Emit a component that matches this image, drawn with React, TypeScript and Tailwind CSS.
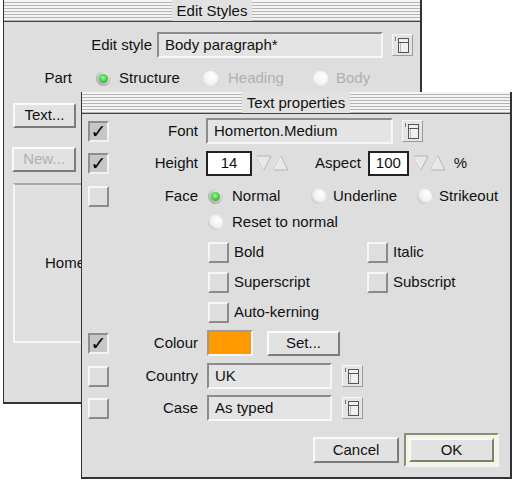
import React from "react";

type Kids = { children?: React.ReactNode };

function TitleBar({ title }: { title: string }) {
  return (
    <div className="h-[22px] flex justify-center bg-[repeating-linear-gradient(to_bottom,#f4f4f4_0px,#f4f4f4_2px,#b4b4b4_2px,#b4b4b4_3px)] border-b border-[#444]">
      <span className="bg-[#e2e2e2] px-[5px] leading-[21px] text-[15px]">{title}</span>
    </div>
  );
}

function MenuIcon() {
  return (
    <div className="w-[21px] h-[22px] shrink-0 bg-[#e4e4e4] border border-t-[#f8f8f8] border-l-[#f8f8f8] border-b-[#9a9a9a] border-r-[#9a9a9a]">
      <svg width="19" height="20" viewBox="0 0 19 20">
        <line x1="2.5" y1="2" x2="2.5" y2="6" stroke="#777" />
        <rect x="5.5" y="3.5" width="10" height="14" fill="#f0f0f0" stroke="#555" />
        <line x1="5.5" y1="7.5" x2="15.5" y2="7.5" stroke="#555" />
        <line x1="7.5" y1="8" x2="7.5" y2="17" stroke="#bbb" />
      </svg>
    </div>
  );
}

function Arrows() {
  return (
    <svg width="33" height="18" viewBox="0 0 33 18" className="shrink-0">
      <polygon points="1,2 15,2 8,16" fill="#e8e8e8" stroke="#b4b4b4" />
      <line x1="1.5" y1="2.5" x2="8" y2="15" stroke="#fafafa" />
      <polygon points="18,16 32,16 25,2" fill="#e8e8e8" stroke="#b4b4b4" />
      <line x1="25" y1="3" x2="18.5" y2="15.5" stroke="#fafafa" />
    </svg>
  );
}

function Radio({ on, off }: { on?: boolean; off?: boolean }) {
  if (off)
    return <span className="block w-[15px] h-[15px] rounded-full shrink-0 bg-[radial-gradient(circle_at_60%_35%,#ffffff_0,#f4f4f4_55%,#d6d6d6_100%)]" />;
  if (on)
    return (
      <span className="w-[15px] h-[15px] rounded-full shrink-0 flex items-center justify-center bg-[radial-gradient(circle_at_65%_30%,#f2f2f2_0,#c4c4c4_55%,#8c8c8c_100%)]">
        <span className="block w-[9px] h-[9px] rounded-full bg-[radial-gradient(circle_at_45%_40%,#a8f5a0_0,#3ccc3c_55%,#1f9a1f_100%)]" />
      </span>
    );
  return <span className="block w-[15px] h-[15px] rounded-full shrink-0 bg-[radial-gradient(circle_at_65%_35%,#ffffff_0,#f0f0f0_50%,#a0a0a0_100%)]" />;
}

function Check({ on }: { on?: boolean }) {
  if (on)
    return (
      <span className="w-[21px] h-[21px] shrink-0 flex items-center justify-center bg-[#c6c6c6] border-2 border-t-[#8e8e8e] border-l-[#8e8e8e] border-b-[#f2f2f2] border-r-[#f2f2f2] font-['DejaVu_Sans',sans-serif] text-[19px] leading-none text-black">
        ✓
      </span>
    );
  return <span className="block w-[21px] h-[21px] shrink-0 bg-[#dedede] border-2 border-t-[#f6f6f6] border-l-[#f6f6f6] border-b-[#8a8a8a] border-r-[#8a8a8a]" />;
}

function Field({ w, children }: { w: string } & Kids) {
  return (
    <div className={`${w} h-[26px] shrink-0 flex items-center px-[6px] bg-[#e4e4e4] border-2 border-t-[#8c8c8c] border-l-[#8c8c8c] border-b-[#f6f6f6] border-r-[#f6f6f6]`}>
      {children}
    </div>
  );
}

function Writable({ w, children }: { w: string } & Kids) {
  return (
    <div className={`${w} h-[25px] shrink-0 flex items-center justify-center bg-white border-2 border-[#222]`}>
      {children}
    </div>
  );
}

function Button({ w, h, dim, children }: { w: string; h: string; dim?: boolean } & Kids) {
  return (
    <div className={`${w} ${h} shrink-0 flex items-center justify-center bg-[#e2e2e2] border-2 border-t-[#fafafa] border-l-[#fafafa] border-b-[#7c7c7c] border-r-[#7c7c7c] ${dim ? "text-[#b0b0b0]" : ""}`}>
      {children}
    </div>
  );
}

function Row({ mt, tick, label, children }: { mt: string; tick?: "on" | "off"; label?: string } & Kids) {
  return (
    <div className={`${mt} h-[26px] flex items-center`}>
      <div className="w-[21px] ml-[6px] shrink-0">{tick && <Check on={tick === "on"} />}</div>
      <div className="w-[89px] text-right shrink-0">{label}</div>
      <div className="ml-[8px] flex items-center">{children}</div>
    </div>
  );
}

export default function App() {
  return (
    <div className="relative w-[514px] h-[481px] bg-white overflow-hidden font-['Liberation_Sans',Arial,sans-serif] text-[15px] text-[#111]">
      {/* Edit Styles window */}
      <div className="absolute left-[3px] top-0 w-[419px] h-[404px] bg-[#dedede] border-l border-r-2 border-b-2 border-[#333]">
        <TitleBar title="Edit Styles" />
        <div className="pt-[11px] h-[24px] flex items-center box-content">
          <div className="w-[148px] text-right">Edit style</div>
          <div className="ml-[5px]">
            <Field w="w-[226px]">Body paragraph*</Field>
          </div>
          <div className="ml-[9px]">
            <MenuIcon />
          </div>
        </div>
        <div className="mt-[9px] h-[24px] flex items-center">
          <div className="w-[68px] text-right">Part</div>
          <div className="ml-[24px] w-[107px] flex items-center gap-[8px]">
            <Radio on />
            <span>Structure</span>
          </div>
          <div className="w-[110px] flex items-center gap-[10px] text-[#b0b0b0]">
            <Radio off />
            <span>Heading</span>
          </div>
          <div className="flex items-center gap-[8px] text-[#b0b0b0]">
            <Radio off />
            <span>Body</span>
          </div>
        </div>
        <div className="mt-[13px] ml-[9px]">
          <Button w="w-[63px]" h="h-[25px]">Text...</Button>
        </div>
        <div className="mt-[19px] ml-[8px]">
          <Button w="w-[64px]" h="h-[25px]" dim>New...</Button>
        </div>
        <div className="mt-[11px] ml-[9px] w-[397px] h-[160px] bg-[#e0e0e0] border-2 border-t-[#a6a6a6] border-l-[#f6f6f6] border-b-[#f6f6f6] border-r-[#a6a6a6] flex items-center pl-[30px]">
          Homerton.Medium
        </div>
      </div>

      {/* Text properties window */}
      <div className="absolute left-[81px] top-[92px] w-[431px] h-[387px] bg-[#dedede] border-l border-r-2 border-b-2 border-[#333]">
        <TitleBar title="Text properties" />
        <div className="pt-[4px]">
          <Row mt="mt-0" tick="on" label="Font">
            <Field w="w-[187px]">Homerton.Medium</Field>
            <div className="ml-[9px]">
              <MenuIcon />
            </div>
          </Row>
          <Row mt="mt-[6px]" tick="on" label="Height">
            <Writable w="w-[46px]">14</Writable>
            <div className="ml-[4px]">
              <Arrows />
            </div>
            <span className="ml-[26px]">Aspect</span>
            <div className="ml-[7px]">
              <Writable w="w-[41px]">100</Writable>
            </div>
            <div className="ml-[4px]">
              <Arrows />
            </div>
            <span className="ml-[8px]">%</span>
          </Row>
          <Row mt="mt-[7px]" tick="off" label="Face">
            <div className="ml-[2px] w-[103px] flex items-center gap-[9px]">
              <Radio on />
              <span>Normal</span>
            </div>
            <div className="w-[106px] flex items-center gap-[7px]">
              <Radio />
              <span>Underline</span>
            </div>
            <div className="flex items-center gap-[7px]">
              <Radio />
              <span>Strikeout</span>
            </div>
          </Row>
          <Row mt="mt-0">
            <div className="ml-[2px] flex items-center gap-[9px]">
              <Radio />
              <span>Reset to normal</span>
            </div>
          </Row>
          <Row mt="mt-[4px]">
            <div className="ml-[2px] w-[159px] flex items-center gap-[5px]">
              <Check />
              <span>Bold</span>
            </div>
            <div className="flex items-center gap-[5px]">
              <Check />
              <span>Italic</span>
            </div>
          </Row>
          <Row mt="mt-[4px]">
            <div className="ml-[2px] w-[159px] flex items-center gap-[5px]">
              <Check />
              <span>Superscript</span>
            </div>
            <div className="flex items-center gap-[5px]">
              <Check />
              <span>Subscript</span>
            </div>
          </Row>
          <Row mt="mt-[4px]">
            <div className="ml-[2px] flex items-center gap-[5px]">
              <Check />
              <span>Auto-kerning</span>
            </div>
          </Row>
          <Row mt="mt-[5px]" tick="on" label="Colour">
            <div className="ml-[1px] w-[46px] h-[26px] bg-[#ff9900] border-2 border-t-[#9a9a9a] border-l-[#9a9a9a] border-b-[#f6f6f6] border-r-[#f6f6f6]" />
            <div className="ml-[14px]">
              <Button w="w-[73px]" h="h-[25px]">Set...</Button>
            </div>
          </Row>
          <Row mt="mt-[7px]" tick="off" label="Country">
            <div className="ml-[1px]">
              <Field w="w-[125px]">UK</Field>
            </div>
            <div className="ml-[10px]">
              <MenuIcon />
            </div>
          </Row>
          <Row mt="mt-[6px]" tick="off" label="Case">
            <div className="ml-[1px]">
              <Field w="w-[125px]">As typed</Field>
            </div>
            <div className="ml-[10px]">
              <MenuIcon />
            </div>
          </Row>
          <div className="mt-[12px] h-[34px] flex items-center justify-end pr-[11px] gap-[5px]">
            <Button w="w-[86px]" h="h-[26px]">Cancel</Button>
            <div className="w-[95px] h-[34px] p-[3px] bg-[#f6f6da] border-2 border-t-[#8a8a8a] border-l-[#8a8a8a] border-b-[#f4f4f4] border-r-[#f4f4f4]">
              <Button w="w-full" h="h-full">OK</Button>
            </div>
          </div>
        </div>
      </div>
    </div>
  );
}
